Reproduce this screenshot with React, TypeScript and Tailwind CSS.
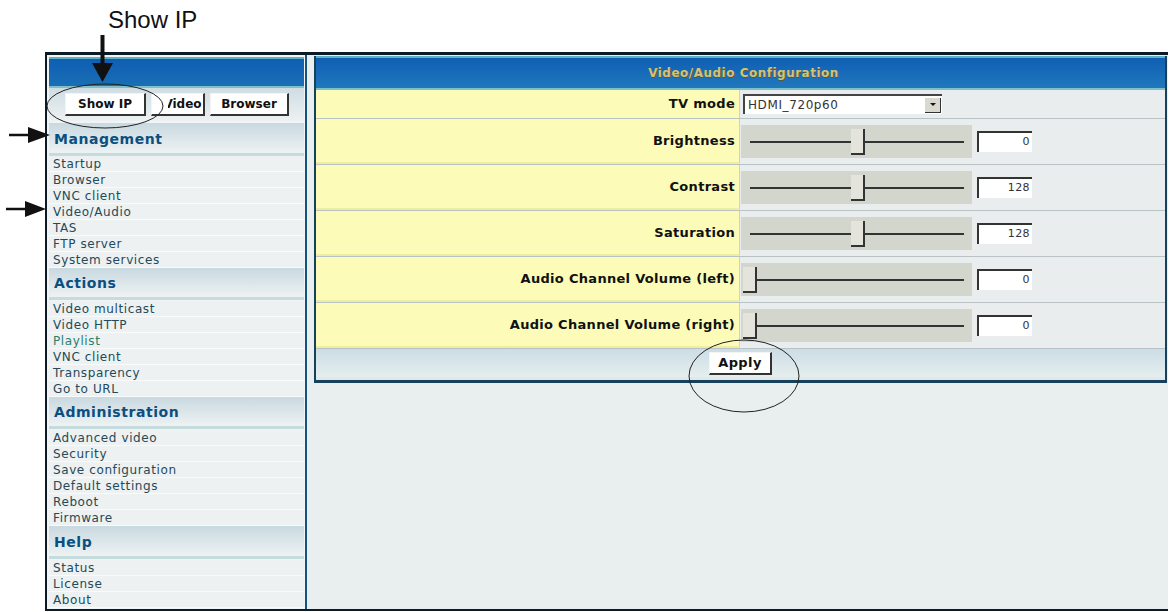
const font = "font-['DejaVu_Sans',sans-serif]";

const menu = [
  { title: "Management", h: "h-[33px]", links: ["Startup", "Browser", "VNC client", "Video/Audio", "TAS", "FTP server", "System services"] },
  { title: "Actions", h: "h-[32px]", links: ["Video multicast", "Video HTTP", "Playlist", "VNC client", "Transparency", "Go to URL"] },
  { title: "Administration", h: "h-[32px]", links: ["Advanced video", "Security", "Save configuration", "Default settings", "Reboot", "Firmware"] },
  { title: "Help", h: "h-[33px]", links: ["Status", "License", "About"] },
];

const sliders = [
  { label: "Brightness", value: "0", mid: true },
  { label: "Contrast", value: "128", mid: true },
  { label: "Saturation", value: "128", mid: true },
  { label: "Audio Channel Volume (left)", value: "0", mid: false },
  { label: "Audio Channel Volume (right)", value: "0", mid: false },
];

function Btn({ children, className }: { children: React.ReactNode; className: string }) {
  return (
    <div
      className={`flex items-center justify-center border-t border-l border-t-[#f4f4f4] border-l-[#f4f4f4] border-r-2 border-b-2 border-r-[#333] border-b-[#333] bg-white font-bold text-[#111] ${className}`}
    >
      {children}
    </div>
  );
}

function SliderRow({ label, value, mid }: { label: string; value: string; mid: boolean }) {
  return (
    <div className="flex h-[46px] border-b border-[#b9c2c4]">
      <div className="flex w-[424px] items-center justify-end border-r border-[#d8d890] border-b-2 border-b-[#efeea0] bg-[#fcfcb8] pr-[4px] text-[13px] font-bold tracking-[0.3px] text-[#111]">
        {label}
      </div>
      <div className="flex flex-1 items-center bg-[#e9eded] pl-[1px]">
        <div className="relative flex h-[33px] w-[231px] items-center bg-[#d3d6cc]">
          <div className={`h-[2px] bg-[#333] ${mid ? "ml-[9px] w-[214px]" : "ml-[16px] w-[207px]"}`} />
          <div
            className={`absolute top-[4px] h-[26px] w-[14px] border-r-2 border-b-2 border-r-[#333] border-b-[#333] bg-[#e4e4dc] ${mid ? "left-[110px]" : "left-[2px]"}`}
          />
        </div>
        <div className="ml-[5px] flex h-[21px] w-[55px] items-center justify-end border-t-2 border-l-2 border-t-[#333] border-l-[#333] bg-white pr-[2px] text-[11px] tracking-[0.4px] text-[#333]">
          {value}
        </div>
      </div>
    </div>
  );
}

export default function App() {
  return (
    <div className={`relative h-[612px] w-[1170px] overflow-hidden bg-white pl-[45px] pt-[52px] ${font}`}>
      <div className="absolute left-[108px] top-[6px] font-['Liberation_Sans',sans-serif] text-[24px] leading-[28px] text-[#111]">
        Show IP
      </div>

      <div className="flex h-[559px] w-[1123px] border-l-2 border-t-[3px] border-b-2 border-[#0c1a26] bg-[#e9eeee]">
        {/* sidebar */}
        <aside className="flex h-full w-[260px] shrink-0 flex-col border-r-2 border-[#17537f] bg-[#f1f4f5] pl-[2px] pr-[1px] pt-[2px]">
          <div className="h-[31px] shrink-0 border-y-2 border-t-[#5fb0c0] border-b-[#7cc0cc] bg-gradient-to-b from-[#0f5eb4] to-[#1a6fb4]" />
          <div className="flex h-[35px] shrink-0 items-center gap-[5px] border-b-2 border-[#f1f4f5] bg-gradient-to-b from-[#cfdde3] to-[#edf1f2] pl-[16px]">
            <Btn className="h-[23px] w-[81px] text-[12px]">Show IP</Btn>
            <Btn className="h-[23px] w-[54px] pl-[10px] text-[12px]">Video</Btn>
            <Btn className="h-[23px] w-[79px] text-[12px]">Browser</Btn>
          </div>
          {menu.map((m) => (
            <div key={m.title}>
              <div
                className={`${m.h} flex items-center border-b-[3px] border-[#c5dcdc] bg-gradient-to-b from-[#c9d9e0] to-[#eef2f3] pl-[5px] pt-[2px] text-[14px] font-bold tracking-[0.55px] text-[#0b4f80]`}
              >
                {m.title}
              </div>
              <div className={m.title === "Management" ? "" : "pt-[1px]"}>
                {m.links.map((l) => (
                  <div
                    key={l}
                    className={`flex h-[16px] items-center border-b border-[#f9fbfb] bg-[#eef1f2] pl-[4px] text-[12px] tracking-[0.6px] ${l === "Playlist" ? "text-[#2c7f6c]" : "text-[#234a58]"}`}
                  >
                    {l}
                  </div>
                ))}
              </div>
            </div>
          ))}
        </aside>

        {/* main panel */}
        <main className="flex-1 pl-[7px] pr-[1px] pt-[1px]">
          <div className="border-x-2 border-b-[3px] border-[#16405c]">
            <div className="flex h-[34px] items-center justify-center border-y-2 border-t-[#5fb0c0] border-b-[#7cc0cc] bg-gradient-to-b from-[#0f5eb4] to-[#2078bc] pl-[6px] text-[12px] font-bold tracking-[0.5px] text-[#d6c27a] [text-shadow:1px_1px_0_#5a5a30]">
              Video/Audio Configuration
            </div>
            <div className="flex h-[29px] border-b border-[#b9c2c4]">
              <div className="flex w-[424px] items-center justify-end border-r border-[#d8d890] bg-[#fcfcb8] pr-[4px] text-[13px] font-bold tracking-[0.3px] text-[#111]">
                TV mode
              </div>
              <div className="flex flex-1 items-center bg-[#e9eded] pl-[3px]">
                <div className="flex h-[20px] w-[199px] items-center justify-between border-t-2 border-l-2 border-t-[#444] border-l-[#444] bg-white pl-[3px] pr-[1px] text-[12px] tracking-[0.6px] text-[#333]">
                  HDMI_720p60
                  <div className="flex h-[15px] w-[16px] items-center justify-center border-r border-b border-[#333] bg-[#d9d9d0]">
                    <div className="h-0 w-0 border-x-[3px] border-t-[3px] border-x-transparent border-t-[#111]" />
                  </div>
                </div>
              </div>
            </div>
            {sliders.map((s) => (
              <SliderRow key={s.label} {...s} />
            ))}
            <div className="flex h-[31px] items-center justify-center border-b-[3px] border-[#dfe9e9] bg-gradient-to-b from-[#cbdde6] to-[#e6eeee]">
              <Btn className="h-[23px] w-[63px] text-[13px] tracking-[0.4px]">Apply</Btn>
            </div>
          </div>
        </main>
      </div>

      {/* callouts drawn over the page */}
      <svg className="absolute left-0 top-0" width="1170" height="612" fill="none">
        <rect x="153" y="96" width="15" height="17" fill="#ffffff" />
        <ellipse cx="105" cy="106" rx="58" ry="22" stroke="#222" />
        <ellipse cx="744" cy="376" rx="55" ry="36" stroke="#222" />
        <path d="M102.500 35V66" stroke="#111" strokeWidth="4" />
        <path d="M92 63H113L102.500 82Z" fill="#111" />
        <path d="M9 135H30" stroke="#111" strokeWidth="2.500" />
        <path d="M28 127V143L50 135Z" fill="#111" />
        <path d="M6 209H27" stroke="#111" strokeWidth="2.500" />
        <path d="M25 201V217L46 209Z" fill="#111" />
      </svg>
    </div>
  );
}
